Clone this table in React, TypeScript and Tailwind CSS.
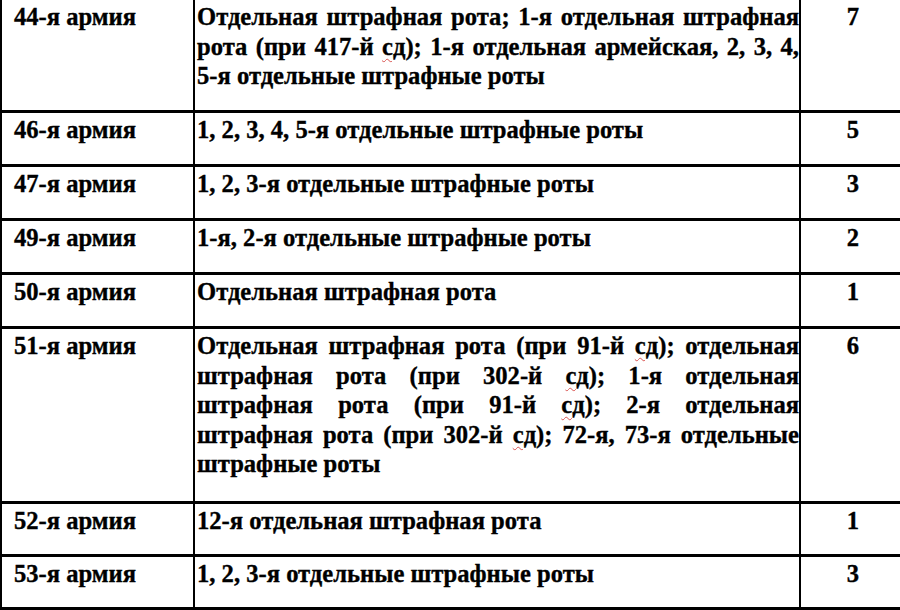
import React from "react";

const Sd = () => (
  <span className="underline decoration-wavy decoration-[#d9534f] decoration-1 underline-offset-[3px]">сд</span>
);

type Row = { army: string; lines: React.ReactNode[]; n: string; h: string };

const rows: Row[] = [
  {
    army: "44-я армия",
    lines: [
      <>Отдельная штрафная рота; 1-я отдельная штрафная</>,
      <>рота (при 417-й <Sd />); 1-я отдельная армейская, 2, 3, 4,</>,
      <>5-я отдельные штрафные роты</>,
    ],
    n: "7",
    h: "h-[113px]",
  },
  { army: "46-я армия", lines: [<>1, 2, 3, 4, 5-я отдельные штрафные роты</>], n: "5", h: "h-[54px]" },
  { army: "47-я армия", lines: [<>1, 2, 3-я отдельные штрафные роты</>], n: "3", h: "h-[54px]" },
  { army: "49-я армия", lines: [<>1-я, 2-я отдельные штрафные роты</>], n: "2", h: "h-[54px]" },
  { army: "50-я армия", lines: [<>Отдельная штрафная рота</>], n: "1", h: "h-[54px]" },
  {
    army: "51-я армия",
    lines: [
      <>Отдельная штрафная рота (при 91-й <Sd />); отдельная</>,
      <>штрафная рота (при 302-й <Sd />); 1-я отдельная</>,
      <>штрафная рота (при 91-й <Sd />); 2-я отдельная</>,
      <>штрафная рота (при 302-й <Sd />); 72-я, 73-я отдельные</>,
      <>штрафные роты</>,
    ],
    n: "6",
    h: "h-[175px]",
  },
  { army: "52-я армия", lines: [<>12-я отдельная штрафная рота</>], n: "1", h: "h-[53px]" },
  { army: "53-я армия", lines: [<>1, 2, 3-я отдельные штрафные роты</>], n: "3", h: "h-[53px]" },
];

export default function App() {
  return (
    <div
      className="w-[900px] h-[610px] overflow-hidden bg-white text-black font-bold text-[24.6px] leading-[29.5px] [-webkit-text-stroke:0.35px_black]"
      style={{ fontFamily: '"Liberation Serif", "Times New Roman", serif' }}
    >
      <div className="w-[910px]">
        {rows.map((r, i) => (
          <div key={i} className={`flex border-b-[3px] border-black ${r.h}`}>
            <div className="w-[195px] shrink-0 border-l-[2px] border-r-[2px] border-black pl-[12px] pt-[2px] whitespace-nowrap">
              {r.army}
            </div>
            <div className="w-[606px] shrink-0 border-r-[2px] border-black pl-[2px] pt-[2px]">
              {r.lines.map((l, j) => (
                <div
                  key={j}
                  className={
                    j < r.lines.length - 1 ? "text-justify [text-align-last:justify] whitespace-nowrap" : "whitespace-nowrap"
                  }
                >
                  {l}
                </div>
              ))}
            </div>
            <div className="w-[104px] shrink-0 text-center pt-[2px]">{r.n}</div>
          </div>
        ))}
      </div>
    </div>
  );
}
